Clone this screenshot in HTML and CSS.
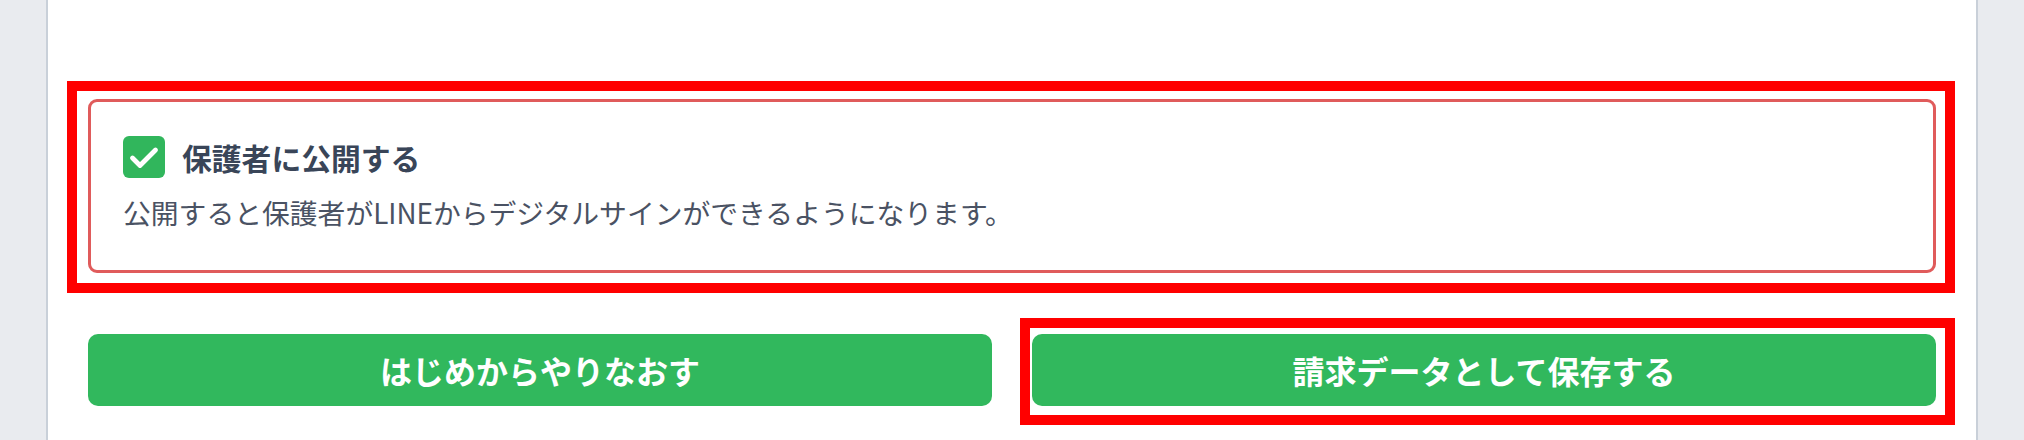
FILE: index.html
```html
<!DOCTYPE html>
<html lang="ja">
<head>
<meta charset="utf-8">
<title>保護者に公開する</title>
<link rel="stylesheet" href="styles.css">
</head>
<body>
<div class="page">
  <main class="panel">
    <section class="notice">
      <label class="notice-title">
        <span class="checkbox">
          <svg viewBox="0 0 42 42" width="42" height="42" aria-hidden="true">
            <polyline points="9.5,22 17,29.5 32.5,14" fill="none" stroke="#ffffff" stroke-width="4.8" stroke-linecap="round" stroke-linejoin="round"/>
          </svg>
        </span>
        <span class="title-text">保護者に公開する</span>
      </label>
      <p class="notice-desc">公開すると保護者がLINEからデジタルサインができるようになります。</p>
    </section>
    <div class="actions">
      <button class="btn" type="button">はじめからやりなおす</button>
      <button class="btn btn-marked" type="button">請求データとして保存する</button>
    </div>
  </main>
</div>
</body>
</html>
```
FILE: styles.css
```css
html, body {
  margin: 0;
  padding: 0;
}
body {
  background: #e9ebef;
  font-family: "Noto Sans CJK JP", "Noto Sans", sans-serif;
  height: 440px;
  overflow: hidden;
}
.page {
  margin: 0 46px;
}
.panel {
  background: #ffffff;
  border-left: 2px solid #c9d0d9;
  border-right: 2px solid #c9d0d9;
  height: 440px;
  box-sizing: border-box;
  padding: 99px 40px 0 40px;
}
.notice {
  position: relative;
  box-sizing: border-box;
  height: 174px;
  border: 3px solid #e05b5b;
  border-radius: 9px;
  padding: 34px 32px 0 32px;
}
.notice::after {
  content: "";
  position: absolute;
  left: -24px;
  top: -21px;
  right: -22px;
  bottom: -23px;
  border: 10px solid #ff0000;
  box-sizing: border-box;
  pointer-events: none;
}
.notice-title {
  display: flex;
  align-items: center;
  gap: 17px;
  height: 42px;
}
.checkbox {
  width: 42px;
  height: 42px;
  border-radius: 6px;
  background: #31b65c;
  display: flex;
  flex: none;
}
.title-text {
  font-size: 29.8px;
  font-weight: 700;
  color: #394558;
  line-height: 42px;
}
.notice-desc {
  margin: 14px 0 0 0;
  font-size: 27.8px;
  line-height: 40px;
  color: #4a5263;
  font-weight: 400;
}
.actions {
  display: grid;
  grid-template-columns: 1fr 1fr;
  gap: 40px;
  margin-top: 61px;
}
.btn {
  position: relative;
  height: 72px;
  border: none;
  border-radius: 10px;
  background: #31b85d;
  color: #ffffff;
  font-family: "Noto Sans CJK JP", "Noto Sans", sans-serif;
  font-size: 32px;
  font-weight: 700;
  padding: 0;
  cursor: pointer;
}
.btn-marked::after {
  content: "";
  position: absolute;
  left: -12px;
  top: -16px;
  right: -19px;
  bottom: -19px;
  border: 10px solid #ff0000;
  box-sizing: border-box;
  pointer-events: none;
}
```
